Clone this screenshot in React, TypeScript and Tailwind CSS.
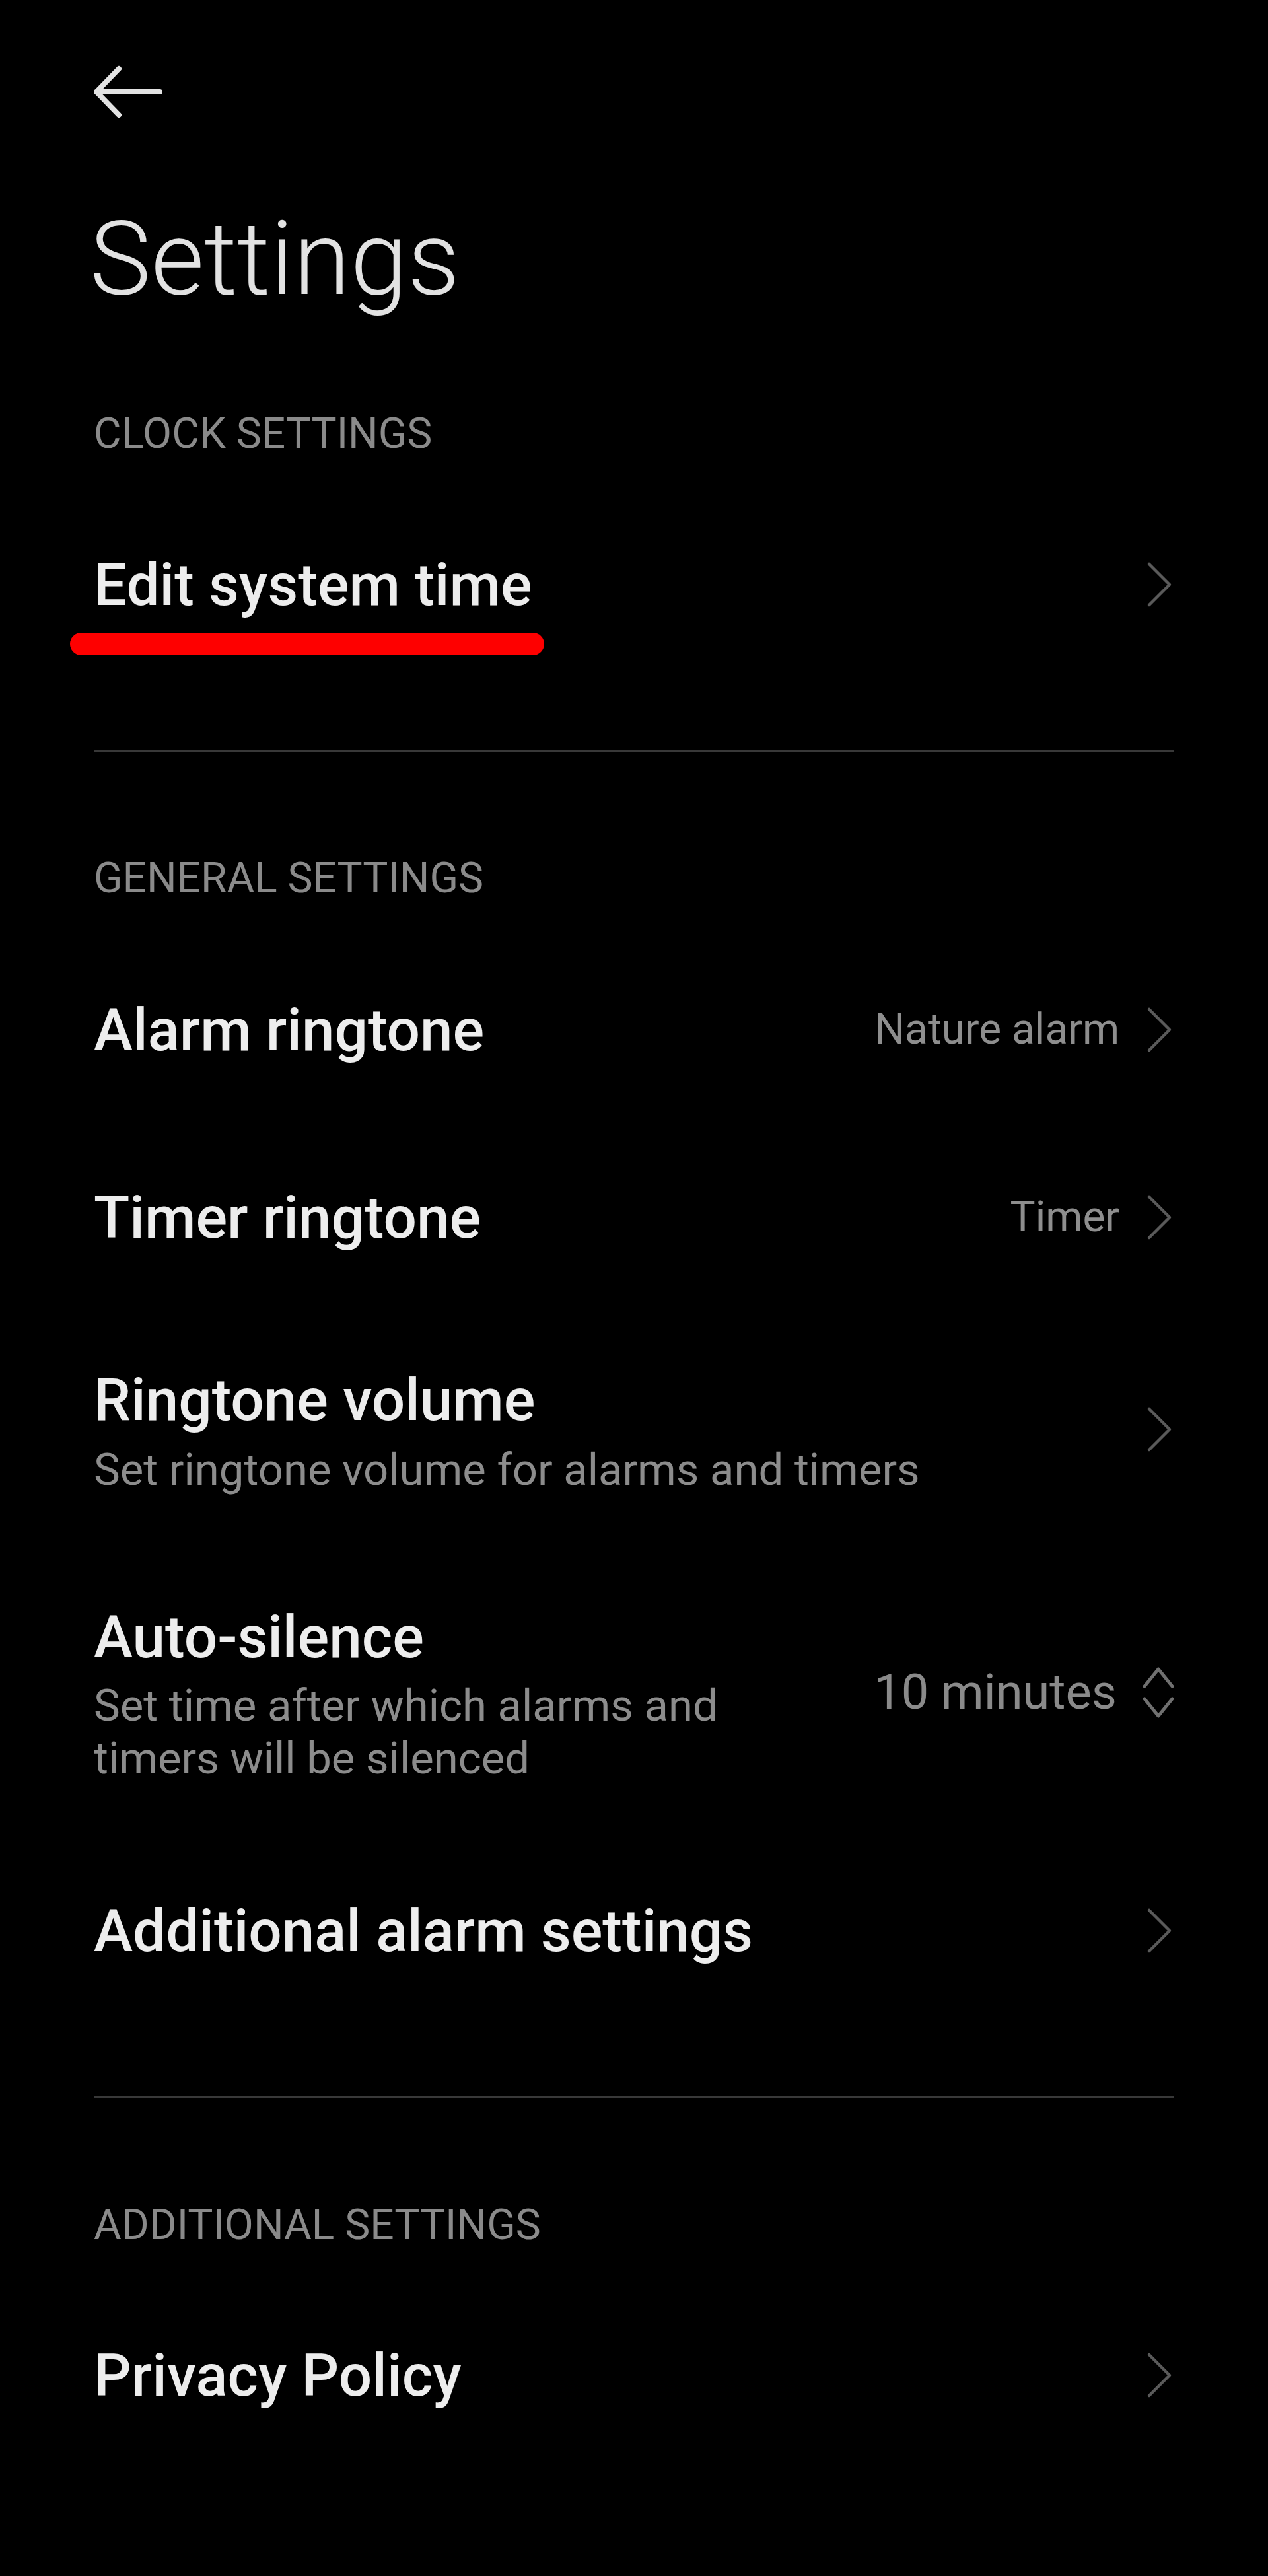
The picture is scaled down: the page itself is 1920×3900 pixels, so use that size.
import React from 'react'

const Chevron = () => (
  <svg width="44" height="70" viewBox="0 0 44 70" className="shrink-0">
    <path d="M6 4 L37 35 L6 66" fill="none" stroke="#5a5a5a" strokeWidth="4.5" strokeLinecap="round" strokeLinejoin="round" />
  </svg>
)

const UpDown = () => (
  <svg width="50" height="80" viewBox="0 0 50 80" className="shrink-0">
    <path d="M5 31 L26 5 L47 31" fill="none" stroke="#707070" strokeWidth="5" strokeLinecap="round" strokeLinejoin="round" />
    <path d="M5 50 L26 76 L47 50" fill="none" stroke="#707070" strokeWidth="5" strokeLinecap="round" strokeLinejoin="round" />
  </svg>
)

function SectionHeader({ label }: { label: string }) {
  return (
    <div className="h-[120px] flex items-center text-[64px] leading-none text-[#8a8a8a]">
      {label}
    </div>
  )
}

function Row({ title, value }: { title: string; value?: string }) {
  return (
    <div className="h-[284px] flex items-center justify-between">
      <span className="text-[89px] leading-none font-medium text-[#ededed]">{title}</span>
      <div className="flex items-center gap-[39px]">
        {value ? <span className="text-[64px] leading-none text-[#8e8e8e]">{value}</span> : null}
        <Chevron />
      </div>
    </div>
  )
}

const Divider = () => <div className="h-[3px] bg-[#383838]" />

export default function App() {
  return (
    <div className="min-h-[3900px] bg-black px-[142px] font-[Roboto,sans-serif]">
      {/* back arrow */}
      <div className="h-[278px] flex items-center">
        <svg width="110" height="80" viewBox="0 0 110 80">
          <path d="M4 40 L100 40 M38 5 L4 40 L38 75" fill="none" stroke="#e2e2e2" strokeWidth="8" strokeLinecap="round" strokeLinejoin="round" />
        </svg>
      </div>

      <h1 className="mt-[36px] h-[156px] text-[156px] leading-none font-light text-[#e2e2e2] -ml-[6px]">Settings</h1>

      <div className="h-[127px]" />
      <SectionHeader label="CLOCK SETTINGS" />
      <div className="h-[26px]" />

      <div className="h-[284px] flex items-center justify-between">
        <span className="relative text-[89px] leading-none font-medium text-[#ededed]">
          Edit system time
          <span className="absolute left-[-36px] top-[117px] w-[718px] h-[34px] rounded-full bg-[#fe0000]" />
        </span>
        <Chevron />
      </div>

      <div className="h-[109px]" />
      <Divider />
      <div className="h-[131px]" />

      <SectionHeader label="GENERAL SETTINGS" />
      <div className="h-[27px]" />
      <Row title="Alarm ringtone" value="Nature alarm" />
      <Row title="Timer ringtone" value="Timer" />

      <div className="h-[358px] flex items-center justify-between">
        <div className="flex flex-col pt-[12px]">
          <span className="text-[89px] leading-none font-medium text-[#ededed]">Ringtone volume</span>
          <span className="mt-[21px] text-[67px] leading-[80px] text-[#8c8c8c]">Set ringtone volume for alarms and timers</span>
        </div>
        <Chevron />
      </div>

      <div className="h-[438px] flex items-center justify-between">
        <div className="flex flex-col pt-[12px]">
          <span className="text-[89px] leading-none font-medium text-[#ededed]">Auto-silence</span>
          <span className="mt-[19px] text-[67px] leading-[80px] text-[#8c8c8c]">
            Set time after which alarms and
            <br />
            timers will be silenced
          </span>
        </div>
        <div className="flex items-center gap-[37px]">
          <span className="text-[74px] leading-none text-[#8a8a8a]">10 minutes</span>
          <UpDown />
        </div>
      </div>

      <Row title="Additional alarm settings" />

      <div className="h-[109px]" />
      <Divider />
      <div className="h-[132px]" />

      <SectionHeader label="ADDITIONAL SETTINGS" />
      <div className="h-[25px]" />
      <Row title="Privacy Policy" />
    </div>
  )
}
